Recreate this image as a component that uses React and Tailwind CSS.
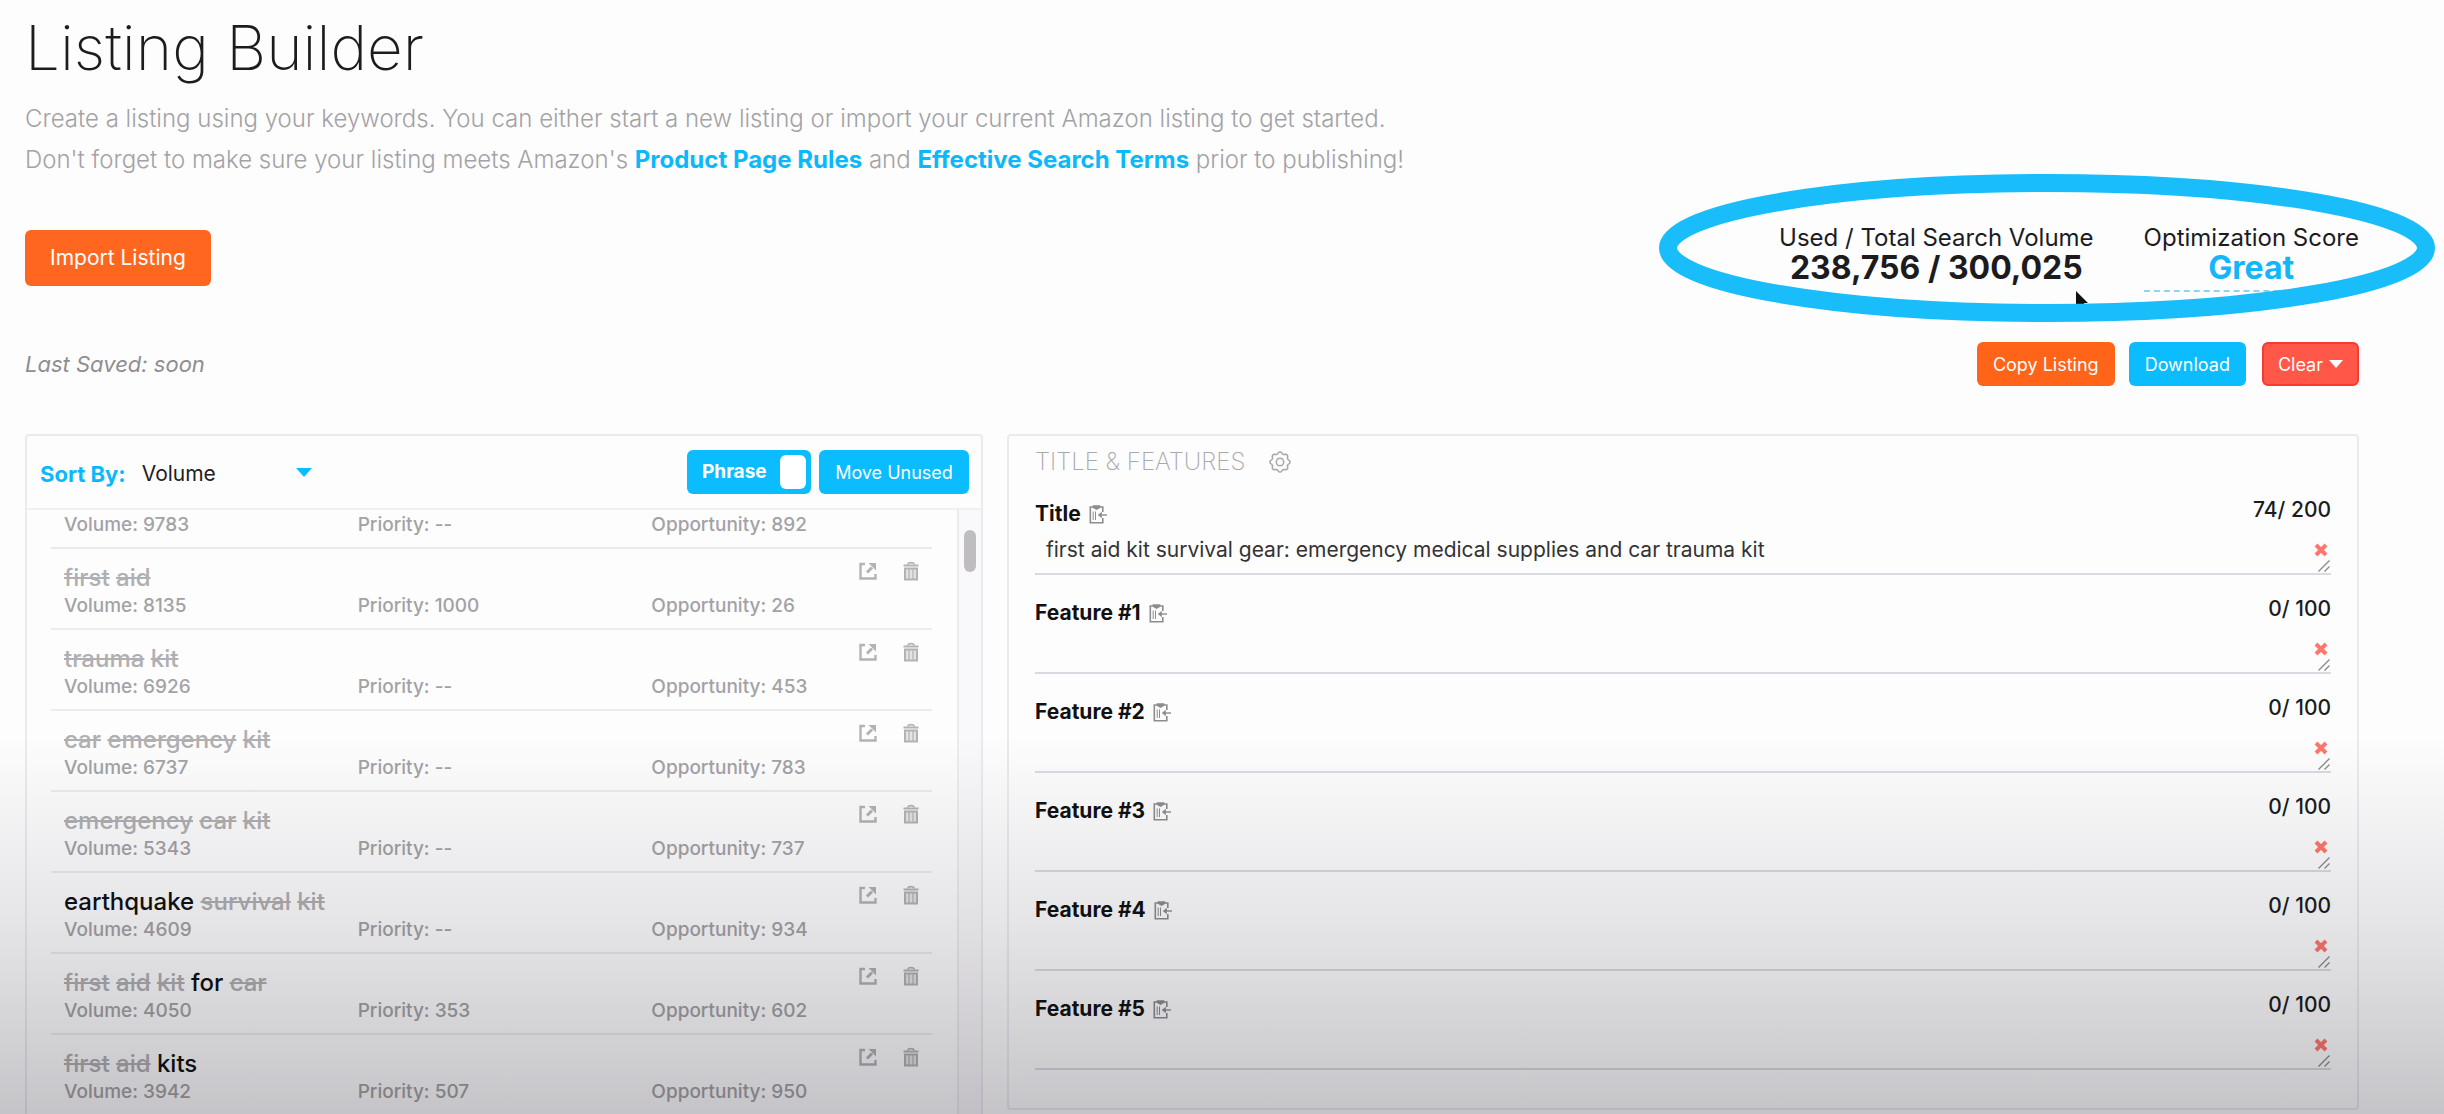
import React, { useState } from 'react';

const KEYWORDS = [
  { words: [['first', true], ['aid', true]], volume: 8135, priority: '1000', opportunity: 26 },
  { words: [['trauma', true], ['kit', true]], volume: 6926, priority: '--', opportunity: 453 },
  { words: [['car', true], ['emergency', true], ['kit', true]], volume: 6737, priority: '--', opportunity: 783 },
  { words: [['emergency', true], ['car', true], ['kit', true]], volume: 5343, priority: '--', opportunity: 737 },
  { words: [['earthquake', false], ['survival', true], ['kit', true]], volume: 4609, priority: '--', opportunity: 934 },
  { words: [['first', true], ['aid', true], ['kit', true], ['for', false], ['car', true]], volume: 4050, priority: '353', opportunity: 602 },
  { words: [['first', true], ['aid', true], ['kits', false]], volume: 3942, priority: '507', opportunity: 950 },
];

const FIELDS = [
  { id: 'title', label: 'Title', max: 200, count: 74, text: 'first aid kit survival gear: emergency medical supplies and car trauma kit' },
  { id: 'feature-1', label: 'Feature #1', max: 100, count: 0, text: '' },
  { id: 'feature-2', label: 'Feature #2', max: 100, count: 0, text: '' },
  { id: 'feature-3', label: 'Feature #3', max: 100, count: 0, text: '' },
  { id: 'feature-4', label: 'Feature #4', max: 100, count: 0, text: '' },
  { id: 'feature-5', label: 'Feature #5', max: 100, count: 0, text: '' },
];

// Eight soft teeth around the centre of a 24x24 box
const GEAR_PATH = Array.from({ length: 96 }, (_, i) => {
  const a = (i / 96) * Math.PI * 2;
  const r = 10 + Math.cos(8 * a);
  return `${i ? 'L' : 'M'}${(12 + r * Math.cos(a)).toFixed(2)} ${(12 + r * Math.sin(a)).toFixed(2)}`;
}).join('') + 'z';

const GearIcon = () => (
  <svg className="w-[22px] h-[22px]" viewBox="0 0 24 24" fill="none" stroke="currentColor" strokeWidth="1.7" strokeLinejoin="round">
    <path d={GEAR_PATH} />
    <circle cx="12" cy="12" r="4" />
  </svg>
);

const ExportIcon = () => (
  <svg className="w-[18px] h-[18px]" viewBox="0 0 18 18" fill="none" stroke="currentColor" strokeWidth="2.4">
    <path d="M6 2H1.5v14.5h15V12" />
    <path d="M8 10.5l5-5" strokeWidth="3" />
    <path d="M9.5 1H17v7.5z" fill="currentColor" stroke="none" />
  </svg>
);

const TrashIcon = () => (
  <svg className="w-4 h-5" viewBox="0 0 16 20" fill="none" stroke="currentColor">
    <path d="M4.5 3.5C5.5 1 10.5 1 11.5 3.5" strokeWidth="1.6" />
    <path d="M.5 4.5h15" strokeWidth="2" />
    <path d="M2 7.5h12v11H2z" strokeWidth="2" fill="currentColor" fillOpacity="0.35" />
    <path d="M6 8v10M10 8v10" strokeWidth="1.2" />
  </svg>
);

const ClipboardIcon = () => (
  <svg className="w-[18px] h-5" viewBox="0 0 18 20" fill="none" stroke="currentColor" strokeWidth="1.6">
    <path d="M13.8 8V3H1.300v15.700h12.500V14" />
    <path d="M4.500 2h6v1.200L7.500 5l-3-1.800z" fill="currentColor" />
    <path d="M4.200 7.500v8.500M6.500 7.500v8.500" strokeWidth="1" />
    <path d="M18 11h-7" strokeWidth="1.400" />
    <path d="M12.800 7.800v6.400L8.800 11z" fill="currentColor" stroke="none" />
  </svg>
);

const Caret = ({ className }) => (
  <svg className={className} viewBox="0 0 16 9" fill="currentColor">
    <path d="M0 0h16L8 9z" />
  </svg>
);

const Stats = ({ volume, priority, opportunity }) => (
  <div className="pt-0.5 grid grid-cols-3 text-[19px] leading-6 font-medium text-[#a3a2a5]">
    <span className="pl-[13px]">Volume: {volume}</span>
    <span className="pl-[13px]">Priority: {priority}</span>
    <span className="pl-[13px]">Opportunity: {opportunity}</span>
  </div>
);

const KeywordRow = ({ item }) => (
  <li className="h-[81px] pt-3 border-b-2 border-[#ebecef]">
    <div className="flex justify-between items-start pl-[13px] pr-[13px]">
      <p className="pt-[3px] text-[24px] leading-7 font-medium text-[#111]">
        {item.words.map(([word, used], i) => (
          <React.Fragment key={i}>
            {i > 0 && ' '}
            {used ? <s className="text-[#b0afb2]">{word}</s> : word}
          </React.Fragment>
        ))}
      </p>
      <div className="flex items-center gap-[26px] text-[#b3b2b5]">
        <button aria-label="Open keyword"><ExportIcon /></button>
        <button aria-label="Delete keyword"><TrashIcon /></button>
      </div>
    </div>
    <Stats {...item} />
  </li>
);

const ListingField = ({ field }) => {
  const [value, setValue] = useState(field.text);
  const used = value === field.text ? field.count : value.length;

  return (
    <div className="pt-[26px]">
      <div className="flex justify-between items-start h-6">
        <div className="flex items-center gap-2">
          <label htmlFor={field.id} className="text-[21px] leading-6 font-bold text-[#111]">{field.label}</label>
          <button aria-label={`Paste into ${field.label}`} className="text-[#8d8c8f]"><ClipboardIcon /></button>
        </div>
        <span className="text-[21px] leading-4 font-medium text-[#1c1c1e]">{used}/ {field.max}</span>
      </div>
      <div className="relative">
        <textarea
          id={field.id}
          value={value}
          onChange={(e) => setValue(e.target.value)}
          className="block w-full h-[49px] pt-3 pl-[11px] pr-10 resize-none overflow-hidden outline-none bg-transparent border-b-2 border-[#d9dbe3] text-[21px] leading-6 text-[#333]"
        />
        <button
          aria-label={`Clear ${field.label}`}
          onClick={() => setValue('')}
          className="absolute right-[3px] top-[17px] text-[#ff776c]"
        >
          <svg className="w-3.5 h-3.5" viewBox="0 0 14 14" fill="none" stroke="currentColor" strokeWidth="4">
            <path d="M2 2l10 10M12 2L2 12" />
          </svg>
        </button>
        <svg className="absolute right-px bottom-[3px] w-3 h-3 text-[#8b8a8d]" viewBox="0 0 12 12" stroke="currentColor" strokeWidth="1.4">
          <path d="M0.5 11.5l11-11M6.5 11.5l5-5" />
        </svg>
      </div>
    </div>
  );
};

const App = () => {
  const [phrase, setPhrase] = useState(true);

  return (
    <div className="relative flex flex-col h-screen overflow-hidden bg-[#fdfdfe] pl-[25px] pr-[85px] pt-4 font-['Inter',sans-serif] text-[#1c1c1e]">
      <h1 className="text-[62px] leading-[64px] font-extralight">Listing Builder</h1>
      <p className="mt-[18px] text-[24px] leading-[41px] font-light text-[#a3a2a5]">
        Create a listing using your keywords. You can either start a new listing or import your current Amazon listing to get started.
        <br />
        Don't forget to make sure your listing meets Amazon's{' '}
        <a href="#rules" className="font-bold text-[#0bb9fb]">Product Page Rules</a> and{' '}
        <a href="#terms" className="font-bold text-[#0bb9fb]">Effective Search Terms</a> prior to publishing!
      </p>

      {/* Import + scores */}
      <div className="mt-[50px] flex justify-between items-start">
        <button className="h-14 px-[25px] rounded-md bg-[#ff6720] text-white text-[21px]">Import Listing</button>
        <div className="relative flex gap-[50px] text-center">
          <div>
            <p className="text-[24px] leading-4">Used / Total Search Volume</p>
            <p className="text-[32px] leading-[44px] font-bold">238,756 / 300,025</p>
          </div>
          <div className="border-b-2 border-dashed border-[#8fd3ee]">
            <p className="text-[24px] leading-4">Optimization Score</p>
            <p className="text-[32px] leading-[44px] font-bold text-[#14b6fb]">Great</p>
          </div>
          <svg className="absolute right-[271px] top-[61px] w-3 h-5" viewBox="0 0 12 20">
            <path d="M0 0v17l4-3.5L7 19l3-1.5L8 12h4z" fill="#111" />
          </svg>
          <svg className="absolute -right-[76px] -top-14 w-[776px] h-[148px] max-w-none pointer-events-none" viewBox="0 0 776 148" fill="none">
            <ellipse cx="388" cy="74" rx="379" ry="65" stroke="#18bdf9" strokeWidth="18" />
          </svg>
        </div>
      </div>

      <div className="mt-[50px] flex justify-between items-center">
        <p className="text-[22px] italic text-[#8e8d90]">Last Saved: soon</p>
        <div className="flex text-[18px] text-white">
          <button className="h-11 px-4 mr-3.5 rounded-md bg-[#ff6418]">Copy Listing</button>
          <button className="h-11 px-4 mr-4 rounded-md bg-[#0bbcff]">Download</button>
          <button className="h-11 px-3.5 rounded-md bg-[#ff5748] border-2 border-[#f93a30] flex items-center gap-1.5">
            Clear <Caret className="w-3.5 h-2" />
          </button>
        </div>
      </div>

      <div className="mt-12 flex-1 min-h-0 grid grid-cols-[958fr_1352fr] gap-6">
        {/* Keyword bank */}
        <section className="flex flex-col min-h-0 border-2 border-b-0 border-[#ebebef] rounded-t">
          <div className="shrink-0 h-[74px] pl-[13px] pr-3 flex items-center justify-between border-b-2 border-[#f0f0f3]">
            <div className="pt-1 flex items-center">
              <label htmlFor="sort" className="text-[22px] font-bold text-[#0bb9fb]">Sort By:</label>
              <div className="relative ml-4">
                <select id="sort" defaultValue="volume" className="appearance-none w-[170px] bg-transparent outline-none text-[21px] text-[#222]">
                  <option value="volume">Volume</option>
                </select>
                <Caret className="absolute right-0 top-2.5 w-4 h-[9px] text-[#0bbcff] pointer-events-none" />
              </div>
            </div>
            <div className="flex gap-2 text-white">
              <button
                role="switch"
                aria-checked={phrase}
                onClick={() => setPhrase(!phrase)}
                className="h-11 w-[124px] pl-[15px] pr-[5px] flex items-center justify-between rounded-md bg-[#0bbcff] text-[19px] font-bold"
              >
                Phrase
                <span className="w-[26px] h-[34px] rounded-md bg-white" />
              </button>
              <button className="h-11 w-[150px] rounded-md bg-[#0bbcff] text-[18px]">Move Unused</button>
            </div>
          </div>
          <div className="flex-1 min-h-0 flex overflow-hidden">
            <ul className="flex-1 ml-6 mr-[25px]">
              <li className="h-[39px] pt-px border-b-2 border-[#e6eaee]">
                <Stats volume={9783} priority="--" opportunity={892} />
              </li>
              {KEYWORDS.map((item) => (
                <KeywordRow key={item.volume} item={item} />
              ))}
            </ul>
            <div className="w-6 border-l-2 border-[#ececef] bg-[#f9f8fa] flex justify-center pt-5">
              <div className="w-3 h-[42px] rounded-full bg-[#bfbdc0]" />
            </div>
          </div>
        </section>

        {/* Listing form */}
        <section className="self-start px-[26px] pt-3 pb-[38px] border-2 border-[#ebebef] rounded">
          <div className="flex items-center gap-6 text-[#a9a8ab]">
            <h2 className="text-[24px] leading-7 font-extralight">TITLE &amp; FEATURES</h2>
            <button aria-label="Settings"><GearIcon /></button>
          </div>
          {FIELDS.map((field) => (
            <ListingField key={field.id} field={field} />
          ))}
        </section>
      </div>

      {/* Bottom fade over the page */}
      <div className="absolute inset-x-0 bottom-0 h-[34%] pointer-events-none bg-linear-to-b from-[#0a0410]/0 via-[#0a0410]/10 to-[#0a0410]/23" />
    </div>
  );
};

export default App;
